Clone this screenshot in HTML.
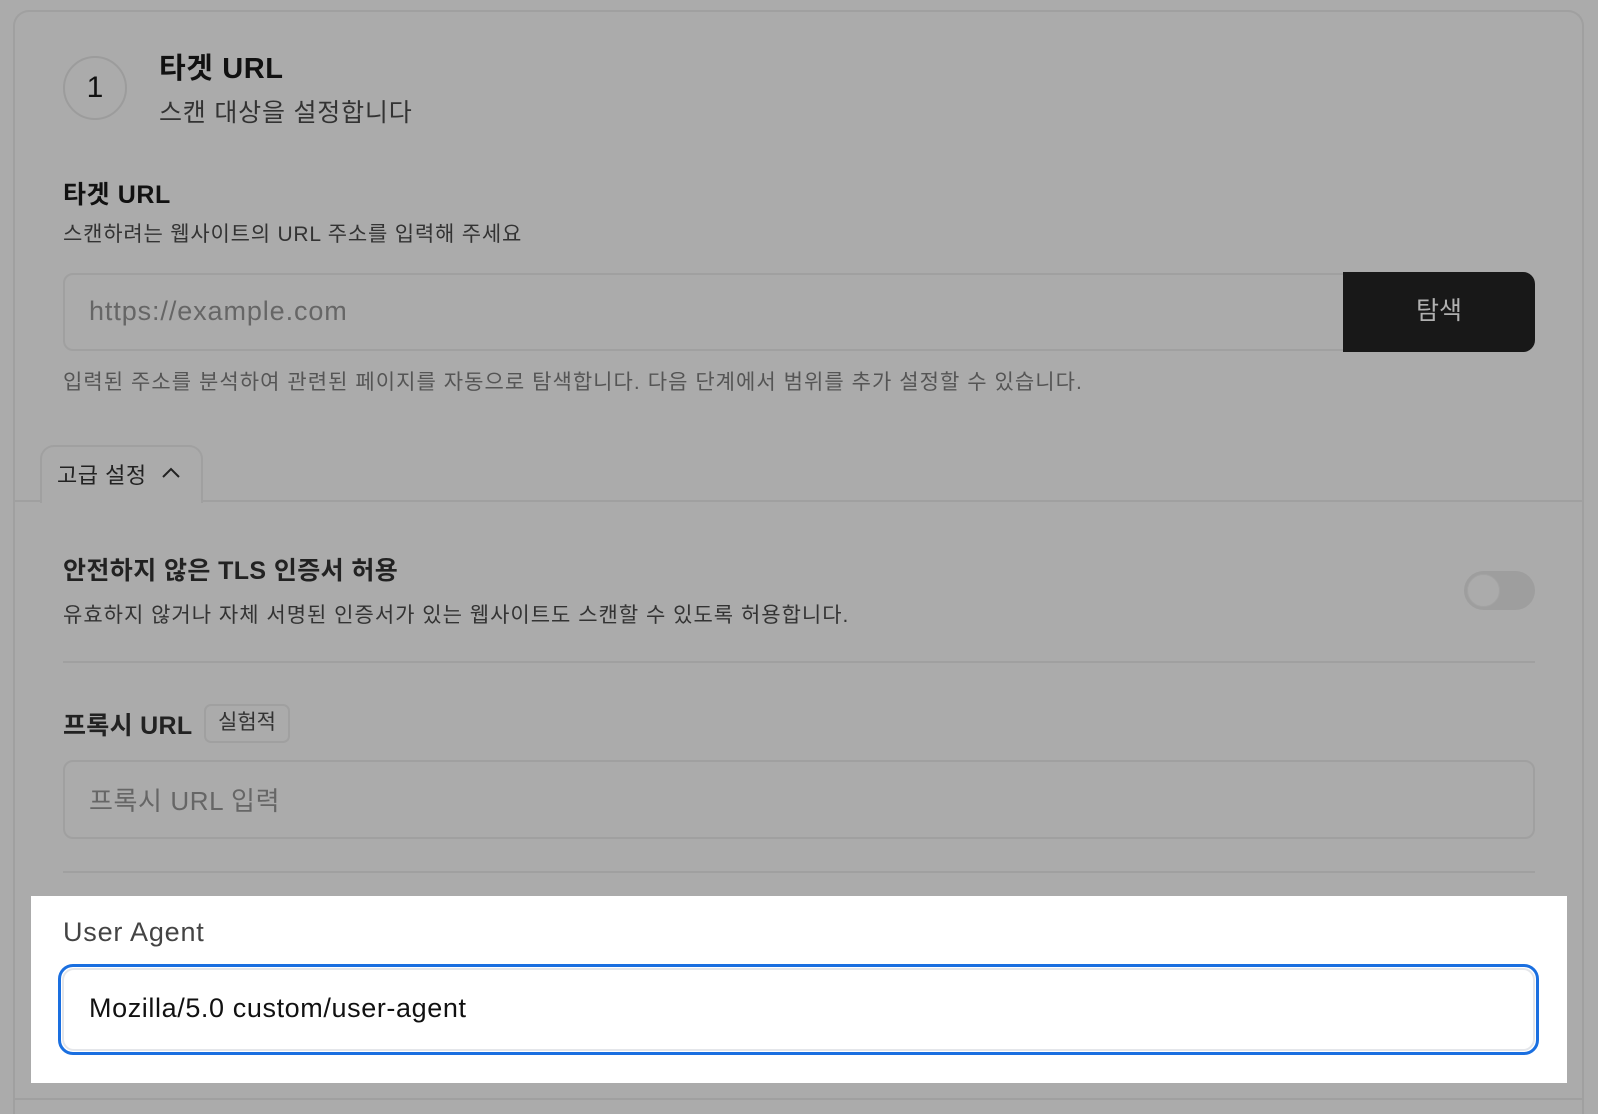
<!DOCTYPE html>
<html style="overflow:hidden;height:1114px"><head><meta charset="utf-8"><style>
*{box-sizing:border-box;margin:0;padding:0}
body{width:1598px;height:1114px;background:#ababab;font-family:"Liberation Sans","Noto Sans CJK KR",sans-serif;position:relative;overflow:hidden;color:#111}
.a{position:absolute;white-space:nowrap}
.card{position:absolute;left:13px;top:10px;width:1571px;height:1104px;border:2px solid #a0a0a0;border-bottom:none;border-radius:16px 16px 0 0}
.line{position:absolute;height:2px;background:#a0a0a0}
.ls{letter-spacing:0.6px}
</style></head><body>
<div class="card"></div>
<div class="a" style="left:63px;top:56px;width:64px;height:64px;border:2px solid #9c9c9c;border-radius:50%;font-size:30px;line-height:60px;text-align:center;font-weight:500">1</div>
<div class="a ls" style="left:159px;top:45px;font-size:29px;font-weight:bold">타겟 URL</div>
<div class="a" style="left:159px;top:93px;font-size:25px;color:#333;letter-spacing:0.8px">스캔 대상을 설정합니다</div>
<div class="a ls" style="left:63px;top:175px;font-size:25px;font-weight:bold">타겟 URL</div>
<div class="a" style="left:63px;top:218px;font-size:21px;color:#333;letter-spacing:0.8px">스캔하려는 웹사이트의 URL 주소를 입력해 주세요</div>
<div class="a" style="left:63px;top:273px;width:1290px;height:78px;border:2px solid #a0a0a0;border-radius:10px 0 0 10px"></div>
<div class="a" style="left:89px;top:296px;font-size:27px;color:#666;letter-spacing:0.9px">https://example.com</div>
<div class="a" style="left:1343px;top:272px;width:192px;height:80px;background:#181818;border-radius:0 12px 12px 0;color:#b0b0b0;font-size:25px;line-height:78px;text-align:center">탐색</div>
<div class="a" style="left:63px;top:366px;font-size:21px;color:#555;letter-spacing:1.05px">입력된 주소를 분석하여 관련된 페이지를 자동으로 탐색합니다. 다음 단계에서 범위를 추가 설정할 수 있습니다.</div>
<div class="line" style="left:13px;top:500px;width:1571px"></div>
<div class="a" style="left:40px;top:445px;width:163px;height:58px;border:2px solid #a0a0a0;border-bottom:none;border-radius:14px 14px 0 0;background:#ababab"></div>
<div class="a" style="left:57px;top:458px;font-size:22px;color:#222;letter-spacing:0.5px">고급 설정</div>
<svg class="a" style="left:161px;top:466px" width="20" height="14" viewBox="0 0 20 14"><path d="M2 11 L10 3 L18 11" fill="none" stroke="#222" stroke-width="2"/></svg>
<div class="a" style="left:63px;top:551px;font-size:25px;font-weight:bold;color:#222;letter-spacing:0.4px">안전하지 않은 TLS 인증서 허용</div>
<div class="a" style="left:63px;top:599px;font-size:21px;color:#333;letter-spacing:1px">유효하지 않거나 자체 서명된 인증서가 있는 웹사이트도 스캔할 수 있도록 허용합니다.</div>
<div class="a" style="left:1464px;top:571px;width:71px;height:39px;border-radius:20px;background:#9e9e9e"></div>
<div class="a" style="left:1467px;top:574px;width:33px;height:33px;border-radius:50%;background:#ababab;border:1px solid #a3a3a3"></div>
<div class="line" style="left:63px;top:661px;width:1472px"></div>
<div class="a" style="left:63px;top:706px;font-size:25px;font-weight:bold;color:#222;letter-spacing:0.3px">프록시 URL</div>
<div class="a" style="left:204px;top:704px;width:86px;height:39px;border:2px solid #a0a0a0;border-radius:7px;font-size:21px;line-height:34px;text-align:center;color:#333">실험적</div>
<div class="a" style="left:63px;top:760px;width:1472px;height:79px;border:2px solid #a0a0a0;border-radius:10px"></div>
<div class="a" style="left:89px;top:781px;font-size:26px;color:#666;letter-spacing:0.6px">프록시 URL 입력</div>
<div class="line" style="left:63px;top:871px;width:1472px"></div>
<div class="line" style="left:13px;top:1098px;width:1571px"></div>
<div class="a" style="left:31px;top:896px;width:1536px;height:187px;background:#fff"></div>
<div class="a" style="left:63px;top:917px;font-size:27px;color:#444;letter-spacing:0.8px">User Agent</div>
<div class="a" style="left:58px;top:964px;width:1481px;height:91px;border:3px solid #1a6fe0;border-radius:15px"></div>
<div class="a" style="left:62px;top:968px;width:1473px;height:83px;border:2px solid #e4e6ea;border-radius:12px"></div>
<div class="a" style="left:89px;top:993px;font-size:27px;color:#111;letter-spacing:0.6px">Mozilla/5.0 custom/user-agent</div>
</body></html>
